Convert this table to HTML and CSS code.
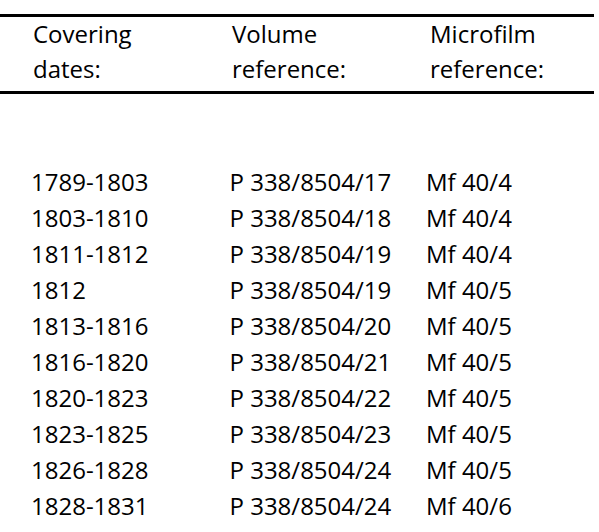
FILE: index.html
```html
<!DOCTYPE html>
<html>
<head>
<meta charset="utf-8">
<link rel="stylesheet" href="styles.css">
</head>
<body>
<div class="page">
  <div class="head">
    <div class="cell">Covering<br>dates:</div>
    <div class="cell">Volume<br>reference:</div>
    <div class="cell">Microfilm<br>reference:</div>
  </div>
  <div class="rows">
    <div class="row"><span>1789-1803</span><span>P 338/8504/17</span><span>Mf 40/4</span></div>
    <div class="row"><span>1803-1810</span><span>P 338/8504/18</span><span>Mf 40/4</span></div>
    <div class="row"><span>1811-1812</span><span>P 338/8504/19</span><span>Mf 40/4</span></div>
    <div class="row"><span>1812</span><span>P 338/8504/19</span><span>Mf 40/5</span></div>
    <div class="row"><span>1813-1816</span><span>P 338/8504/20</span><span>Mf 40/5</span></div>
    <div class="row"><span>1816-1820</span><span>P 338/8504/21</span><span>Mf 40/5</span></div>
    <div class="row"><span>1820-1823</span><span>P 338/8504/22</span><span>Mf 40/5</span></div>
    <div class="row"><span>1823-1825</span><span>P 338/8504/23</span><span>Mf 40/5</span></div>
    <div class="row"><span>1826-1828</span><span>P 338/8504/24</span><span>Mf 40/5</span></div>
    <div class="row"><span>1828-1831</span><span>P 338/8504/24</span><span>Mf 40/6</span></div>
  </div>
</div>
</body>
</html>
```

FILE: styles.css
```css
html, body {
  margin: 0;
  padding: 0;
  background: #ffffff;
}
.page {
  font-family: "Open Sans", sans-serif;
  font-size: 24px;
  color: #000000;
  padding-top: 14px;
}
.head {
  width: 594px;
  border-top: 3px solid #000;
  border-bottom: 3px solid #000;
  display: grid;
  grid-template-columns: 199px 198px 1fr;
  padding-left: 33px;
  padding-bottom: 5px;
  box-sizing: border-box;
  line-height: 34.6px;
}
.rows {
  padding-top: 70px;
  padding-left: 31px;
  line-height: 36px;
}
.row {
  display: grid;
  grid-template-columns: 198.5px 196.5px 1fr;
}
```
